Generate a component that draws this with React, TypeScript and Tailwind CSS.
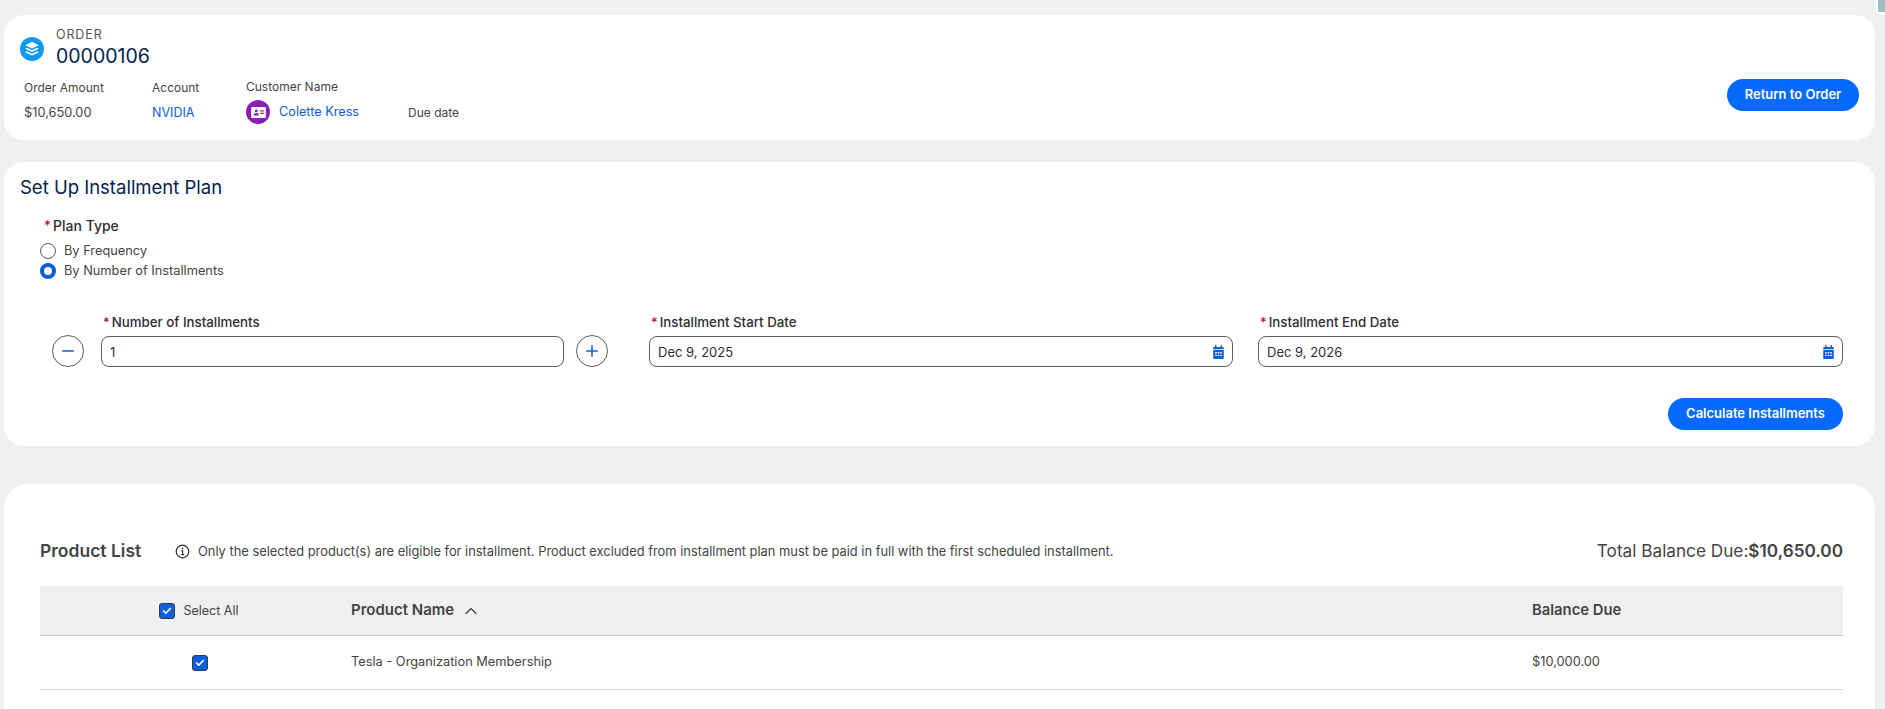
import { Check, ChevronUp, Minus, Plus } from "lucide-react";

const Req = () => <span className="text-[#ba0517] mr-[2px] font-normal">*</span>;

const CalendarIcon = () => (
  <svg viewBox="0 0 14 16" className="w-[13px] h-[14px]" fill="#0b5cd5">
    <rect x="3" y="0" width="1.6" height="3" rx=".6" />
    <rect x="9.4" y="0" width="1.6" height="3" rx=".6" />
    <path d="M1 3.2c0-.6.5-1 1-1h10c.5 0 1 .4 1 1v1.6H1z" />
    <path
      fillRule="evenodd"
      d="M1 5.8h12V15c0 .5-.5 1-1 1H2c-.5 0-1-.5-1-1zM3.2 8v1.6h1.8V8zm2.9 0v1.6h1.8V8zm2.9 0v1.6h1.8V8zM3.2 11v1.6h1.8V11zm2.9 0v1.6h1.8V11zm2.9 0v1.6h1.8V11z"
    />
  </svg>
);

const Checkbox = () => (
  <span className="w-4 h-4 rounded-[3px] bg-[#0b5fe0] border border-[#3a3a3a] flex items-center justify-center">
    <Check className="w-[10px] h-[10px] text-white" strokeWidth={4} />
  </span>
);

const DateField = ({ label, value, width }: { label: string; value: string; width: string }) => (
  <div className={width}>
    <div className="text-[13.3px] font-medium text-[#2e2e2e] leading-[18px] pl-[2px] mb-[5px]">
      <Req />
      {label}
    </div>
    <div className="h-[31px] border border-[#5c5c5c] rounded-[8px] flex items-center justify-between pl-2 pr-[7px] text-[13px] text-[#2e2e2e]">
      <span className="pt-[2px]">{value}</span>
      <CalendarIcon />
    </div>
  </div>
);

export default function App() {
  return (
    <div className="min-h-[709px] h-[709px] overflow-hidden bg-[#f0f0f0] pl-1 pr-[10px] pt-[15px] font-['Inter',sans-serif] text-[#444444] relative">
      <div className="absolute right-0 top-0 w-[9px] h-[14px] bg-[#a3bcc4] border-l-2 border-b-2 border-white rounded-bl-[3px]" />

      {/* Order header */}
      <section className="h-[125px] bg-white rounded-[20px] pl-4 pr-4 pt-[12px] flex justify-between">
        <div>
          <div className="flex items-center gap-3">
            <span className="w-6 h-6 mt-[2px] rounded-full bg-[#0b9bf5] flex items-center justify-center">
              <svg viewBox="0 0 16 16" className="w-[18px] h-[18px]" fill="white">
                <path d="M8 1.6 14 4.6 8 7.6 2 4.6z" />
                <path d="M3.6 6.9 2 7.7 8 10.7 14 7.7 12.4 6.9 8 9.1z" />
                <path d="M3.6 10 2 10.8 8 13.8 14 10.8 12.4 10 8 12.2z" />
              </svg>
            </span>
            <div>
              <div className="text-[12.5px] leading-[16px] tracking-[0.07em] text-[#555555]">ORDER</div>
              <div className="text-[19.5px] leading-[24px] mt-[1px] text-[#03234d]">00000106</div>
            </div>
          </div>
          <div className="flex text-[12.8px] pl-1 mt-[10px]">
            <div className="w-[128px]">
              <div className="text-[12px] leading-[18px] mt-[1px]">Order Amount</div>
              <div className="leading-[18px] mt-[7px]">$10,650.00</div>
            </div>
            <div className="w-[94px]">
              <div className="text-[12px] leading-[18px] mt-[1px]">Account</div>
              <div className="text-[12.5px] leading-[18px] mt-[7px] text-[#0b5cd5]">NVIDIA</div>
            </div>
            <div className="w-[162px]">
              <div className="text-[12px] leading-[18px]">Customer Name</div>
              <div className="flex items-center gap-[9px] mt-[4px]">
                <span className="w-6 h-6 rounded-full bg-[#8a1fb5] flex items-center justify-center">
                  <svg viewBox="0 0 16 12" className="w-[15px] h-[11px]" fill="white">
                    <path
                      fillRule="evenodd"
                      d="M1.2 0h13.6C15.500 0 16 .5 16 1.200v9.600c0 .7-.5 1.200-1.200 1.200H1.200C.5 12 0 11.500 0 10.800V1.200C0 .5.500 0 1.200 0zM5.500 2.800a1.500 1.500 0 1 0 0 3 1.500 1.500 0 0 0 0-3zM2.700 9.400h5.600V8.300C8.300 7.200 7 6.600 5.500 6.600s-2.800.6-2.800 1.700zM10 3.600v1.200h3.800V3.600zm0 2.700v1.200h3.800V6.300z"
                    />
                  </svg>
                </span>
                <span className="text-[#0b5cd5] text-[12.7px]">Colette Kress</span>
              </div>
            </div>
            <div className="text-[12px] pt-[26px] leading-[18px]">Due date</div>
          </div>
        </div>
        <button className="self-start mt-[52px] w-[132px] h-8 rounded-full bg-[#066afe] text-white text-[13px] font-semibold">
          Return to Order
        </button>
      </section>

      {/* Plan setup */}
      <section className="h-[284px] mt-[22px] bg-white rounded-[20px] px-4 pt-[13px]">
        <h1 className="text-[18.5px] leading-[24px] text-[#03234d] font-normal">Set Up Installment Plan</h1>

        <div className="pl-[20px] mt-[18px]">
          <div className="text-[14px] font-medium text-[#2e2e2e] leading-[18px] pl-[4px]">
            <Req />
            Plan Type
          </div>
          <div className="mt-[8px] flex flex-col gap-[4px] text-[12.8px] leading-[16px]">
            <div className="flex items-center gap-2">
              <span className="w-4 h-4 rounded-full border border-[#5c5c5c]" />
              By Frequency
            </div>
            <div className="flex items-center gap-2">
              <span className="w-4 h-4 rounded-full border-[4px] border-[#0b5cd5]" />
              By Number of Installments
            </div>
          </div>
        </div>

        <div className="flex items-end mt-[34px] pl-[32px] pr-[16px]">
          <span className="w-8 h-8 rounded-full border border-[#5c5c5c] flex items-center justify-center text-[#0b5cd5]">
            <Minus className="w-[18px] h-[18px]" strokeWidth={2} />
          </span>
          <div className="w-[463px] ml-[17px]">
            <div className="text-[13.3px] font-medium text-[#2e2e2e] leading-[18px] pl-[2px] mb-[5px]">
              <Req />
              Number of Installments
            </div>
            <div className="h-[31px] border border-[#5c5c5c] rounded-[8px] flex items-center pl-2 text-[13px] text-[#2e2e2e]">
              <span className="pt-[2px]">1</span>
            </div>
          </div>
          <span className="w-8 h-8 rounded-full border border-[#5c5c5c] flex items-center justify-center text-[#0b5cd5] ml-[12px]">
            <Plus className="w-[18px] h-[18px]" strokeWidth={2} />
          </span>
          <div className="ml-[41px]">
            <DateField label="Installment Start Date" value="Dec 9, 2025" width="w-[584px]" />
          </div>
          <div className="ml-[25px]">
            <DateField label="Installment End Date" value="Dec 9, 2026" width="w-[585px]" />
          </div>
        </div>

        <div className="flex justify-end pr-[16px] mt-[31px]">
          <button className="w-[175px] h-8 rounded-full bg-[#066afe] text-white text-[13px] font-semibold">
            Calculate Installments
          </button>
        </div>
      </section>

      {/* Product list */}
      <section className="h-[300px] mt-[38px] bg-white rounded-[24px] pl-[36px] pr-[32px] pt-[53px]">
        <div className="flex items-center justify-between h-[28px]">
          <div className="flex items-center">
            <h2 className="text-[17.5px] font-semibold text-[#444444] w-[135px]">Product List</h2>
            <svg viewBox="0 0 16 16" className="w-[15px] h-[15px] mr-2 shrink-0" fill="none" stroke="#2e2e2e">
              <circle cx="8" cy="8" r="6.700" strokeWidth="1.300" />
              <path d="M6.700 7.300H8.200V11.300M6.700 11.300H9.700" strokeWidth="1.200" />
              <circle cx="8" cy="4.900" r=".9" fill="#2e2e2e" stroke="none" />
            </svg>
            <span className="text-[12.87px] pt-[2px] text-[#444444]">
              Only the selected product(s) are eligible for installment. Product excluded from installment plan must be paid in full with the first scheduled installment.
            </span>
          </div>
          <div className="text-[17.2px]">
            Total Balance Due:<span className="font-semibold">$10,650.00</span>
          </div>
        </div>

        <div className="mt-[21px] h-[50px] bg-[#f0f0f0] border-b border-[#c9c9c9] flex items-center">
          <div className="w-[311px] pl-[7px] pt-[1px] flex justify-center items-center gap-2 text-[12.5px]">
            <Checkbox />
            Select All
          </div>
          <div className="w-[1181px] flex items-center gap-[7px] text-[15px] font-semibold">
            Product Name
            <ChevronUp className="w-5 h-5" strokeWidth={1.5} />
          </div>
          <div className="text-[14.8px] font-semibold">Balance Due</div>
        </div>

        <div className="h-[54px] border-b border-[#d9d9d9] flex items-center text-[12.8px]">
          <div className="w-[311px] pl-2 flex justify-center">
            <Checkbox />
          </div>
          <div className="w-[1181px] pb-[1px]">Tesla - Organization Membership</div>
          <div className="pb-[1px]">$10,000.00</div>
        </div>
      </section>
    </div>
  );
}
